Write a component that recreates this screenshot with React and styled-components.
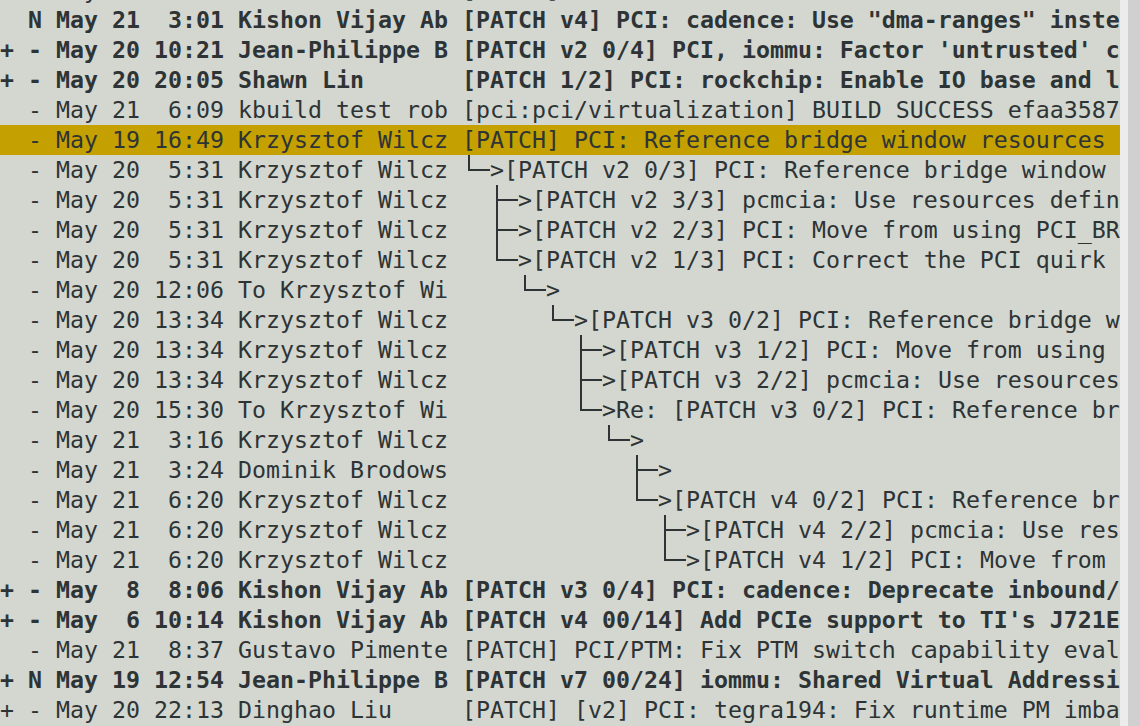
import React from "react";
import styled, { createGlobalStyle } from "styled-components";

const Global = createGlobalStyle`
  html, body { margin: 0; padding: 0; background: #d3d7cf; overflow: hidden; }
  #root { height: 726px; }
`;

const Screen = styled.div`
  display: flex;
  width: 1140px;
  height: 726px;
  overflow: hidden;
  background: #d3d7cf;
`;

const Terminal = styled.div`
  width: 1120px;
  height: 726px;
  overflow: hidden;
  flex: none;
`;

const List = styled.div`
  display: flex;
  flex-direction: column;
  margin-top: -25px;
`;

const Row = styled.div`
  display: flex;
  align-items: center;
  height: 30px;
  width: 1120px;
  overflow: hidden;
  white-space: pre;
  font-family: "DejaVu Sans Mono", monospace;
  font-size: 23.25px;
  line-height: 30px;
  color: #2e3436;
  font-weight: ${(p) => (p.$bold ? 700 : 400)};
  background: ${(p) => (p.$hl ? "#c4a000" : "transparent")};
`;

const Text = styled.span`
  flex: none;
`;

const Cell = styled.svg`
  flex: none;
  display: block;
  width: 14px;
  height: 30px;
`;

const ScrollEdge = styled.div`
  width: 8px;
  flex: none;
  background: #ececec;
`;

const ScrollTrack = styled.div`
  flex: 1;
  background: #d0d0d0;
`;

const INK = "#2e3436";

function TreeCell({ kind }) {
  return (
    <Cell viewBox="0 0 14 30">
      {kind === "tee" && (
        <>
          <rect x="6" y="0" width="2" height="30" fill={INK} />
          <rect x="6" y="14" width="8" height="2" fill={INK} />
        </>
      )}
      {kind === "corner" && (
        <>
          <rect x="6" y="0" width="2" height="16" fill={INK} />
          <rect x="6" y="14" width="8" height="2" fill={INK} />
        </>
      )}
      {kind === "dash" && <rect x="0" y="14" width="14" height="2" fill={INK} />}
    </Cell>
  );
}

function Tree({ spec }) {
  const kinds = { " ": "blank", "├": "tee", "└": "corner", "─": "dash" };
  return (
    <>
      {Array.from(spec).map((ch, i) =>
        ch === ">" ? <Text key={i}>&gt;</Text> : <TreeCell key={i} kind={kinds[ch]} />
      )}
    </>
  );
}

const rows = [
  ["", "-", "May 21", "1:40", "Lorenzo Pieral", "", "[PATCH] PCI: Add the ATS index check to model the bus"],
  ["", "N", "May 21", "3:01", "Kishon Vijay Abraham", "", "[PATCH v4] PCI: cadence: Use \"dma-ranges\" instead of \"cdns,no-bar-match-nbits\"", 1],
  ["+", "-", "May 20", "10:21", "Jean-Philippe Brucker", "", "[PATCH v2 0/4] PCI, iommu: Factor 'untrusted' check for ATS enablement", 1],
  ["+", "-", "May 20", "20:05", "Shawn Lin", "", "[PATCH 1/2] PCI: rockchip: Enable IO base and limit registers", 1],
  ["", "-", "May 21", "6:09", "kbuild test robot", "", "[pci:pci/virtualization] BUILD SUCCESS efaa358764b9a6d3e1a3"],
  ["", "-", "May 19", "16:49", "Krzysztof Wilczynski", "", "[PATCH] PCI: Reference bridge window resources explicitly", 0, 1],
  ["", "-", "May 20", "5:31", "Krzysztof Wilczynski", "└─>", "[PATCH v2 0/3] PCI: Reference bridge window resources explicitly"],
  ["", "-", "May 20", "5:31", "Krzysztof Wilczynski", "  ├─>", "[PATCH v2 3/3] pcmcia: Use resources defined in PCI core"],
  ["", "-", "May 20", "5:31", "Krzysztof Wilczynski", "  ├─>", "[PATCH v2 2/3] PCI: Move from using PCI_BRIDGE_RESOURCES"],
  ["", "-", "May 20", "5:31", "Krzysztof Wilczynski", "  └─>", "[PATCH v2 1/3] PCI: Correct the PCI quirk"],
  ["", "-", "May 20", "12:06", "To Krzysztof Wilczynski", "    └─>", ""],
  ["", "-", "May 20", "13:34", "Krzysztof Wilczynski", "      └─>", "[PATCH v3 0/2] PCI: Reference bridge window"],
  ["", "-", "May 20", "13:34", "Krzysztof Wilczynski", "        ├─>", "[PATCH v3 1/2] PCI: Move from using PCI_BRIDGE"],
  ["", "-", "May 20", "13:34", "Krzysztof Wilczynski", "        ├─>", "[PATCH v3 2/2] pcmcia: Use resources defined"],
  ["", "-", "May 20", "15:30", "To Krzysztof Wilczynski", "        └─>", "Re: [PATCH v3 0/2] PCI: Reference bridge window"],
  ["", "-", "May 21", "3:16", "Krzysztof Wilczynski", "          └─>", ""],
  ["", "-", "May 21", "3:24", "Dominik Brodowski", "            ├─>", ""],
  ["", "-", "May 21", "6:20", "Krzysztof Wilczynski", "            └─>", "[PATCH v4 0/2] PCI: Reference bridge window"],
  ["", "-", "May 21", "6:20", "Krzysztof Wilczynski", "              ├─>", "[PATCH v4 2/2] pcmcia: Use resources defined"],
  ["", "-", "May 21", "6:20", "Krzysztof Wilczynski", "              └─>", "[PATCH v4 1/2] PCI: Move from using PCI_BRIDGE"],
  ["+", "-", "May 8", "8:06", "Kishon Vijay Abraham", "", "[PATCH v3 0/4] PCI: cadence: Deprecate inbound/outbound specific bindings", 1],
  ["+", "-", "May 6", "10:14", "Kishon Vijay Abraham", "", "[PATCH v4 00/14] Add PCIe support to TI's J721E SoC", 1],
  ["", "-", "May 21", "8:37", "Gustavo Pimentel", "", "[PATCH] PCI/PTM: Fix PTM switch capability evaluation"],
  ["+", "N", "May 19", "12:54", "Jean-Philippe Brucker", "", "[PATCH v7 00/24] iommu: Shared Virtual Addressing for SMMUv3", 1],
  ["+", "-", "May 20", "22:13", "Dinghao Liu", "", "[PATCH] [v2] PCI: tegra194: Fix runtime PM imbalance on error"],
  ["", "-", "May 21", "9:02", "Bjorn Helgaas", "", "Re: [PATCH] PCI: Fix up ATS"],
];

function prefix(flag, status, date, time, from) {
  const [mon, day] = date.split(" ");
  return `${(flag || " ")} ${status} ${mon} ${day.padStart(2)} ${time.padStart(5)} ${from
    .padEnd(15)
    .slice(0, 15)} `;
}

export default function App() {
  return (
    <>
      <Global />
      <Screen>
        <Terminal>
          <List>
            {rows.map(([flag, status, date, time, from, tree, subject, bold, hl], i) => (
              <Row key={i} $bold={!!bold} $hl={!!hl}>
                <Text>{prefix(flag, status, date, time, from)}</Text>
                {tree && <Tree spec={tree} />}
                <Text>{subject}</Text>
              </Row>
            ))}
          </List>
        </Terminal>
        <ScrollEdge />
        <ScrollTrack />
      </Screen>
    </>
  );
}
